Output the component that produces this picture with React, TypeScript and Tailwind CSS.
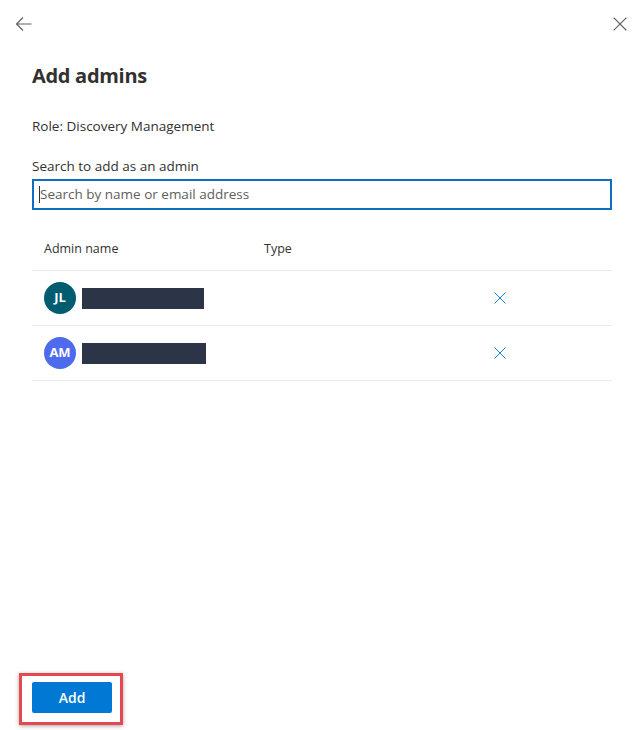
import React from "react";

const font = { fontFamily: '"Open Sans", "Noto Sans", sans-serif' };

function XIcon({ size, color, sw }: { size: number; color: string; sw: number }) {
  return (
    <svg width={size} height={size} viewBox="0 0 14 14" fill="none">
      <path d="M1 1L13 13M13 1L1 13" stroke={color} strokeWidth={sw} strokeLinecap="square" />
    </svg>
  );
}

function Row({ initials, bg, barW }: { initials: string; bg: string; barW: string }) {
  return (
    <div className="flex h-[55px] items-center border-b border-[#edebe9]">
      <div className="flex w-[458px] items-center pl-3">
        <div
          className={`flex h-8 w-8 items-center justify-center rounded-full ${bg} text-[13px] font-bold text-white`}
        >
          {initials}
        </div>
        <div className={`ml-[6px] h-[21px] ${barW} bg-[#2c3447]`} />
      </div>
      <div className="flex w-[20px] justify-center">
        <XIcon size={12} color="#0078d4" sw={1.1} />
      </div>
    </div>
  );
}

export default function App() {
  return (
    <div className="flex h-[730px] w-[644px] flex-col bg-white text-[#323130]" style={font}>
      <div className="flex h-12 items-center justify-between pl-[15px] pr-[17px]">
        <svg width="17" height="16" viewBox="0 0 17 16" fill="none">
          <path d="M16.5 8H1.5M8 1.5L1.5 8L8 14.5" stroke="#616161" strokeWidth="1.2" />
        </svg>
        <XIcon size={14} color="#616161" sw={1.1} />
      </div>
      <div className="px-8">
        <h1 className="mt-[14px] text-[20px] font-bold leading-7 tracking-[-0.3px]">Add admins</h1>
        <p className="mt-[26px] text-[13.5px] leading-5">Role: Discovery Management</p>
        <label className="mt-[20px] block text-[13.5px] font-medium leading-5">Search to add as an admin</label>
        <div className="mt-[3px] flex h-[31px] items-center border-2 border-[#106ebe] pl-[5px]">
          <span className="h-[17px] w-px bg-[#323130]" />
          <span className="text-[13.5px] text-[#605e5c]">Search by name or email address</span>
        </div>
        <div className="mt-[19px] flex h-[42px] items-center border-b border-[#edebe9] text-[12.5px] text-[#323130]">
          <span className="w-[232px] pl-3">Admin name</span>
          <span>Type</span>
        </div>
        <Row initials="JL" bg="bg-[#025c6f]" barW="w-[122px]" />
        <Row initials="AM" bg="bg-[#4f6bed]" barW="w-[124px]" />
      </div>
      <div className="flex-1" />
      <div className="pb-[5px] pl-[19px]">
        <div className="inline-block border-[3px] border-[#e5484d] pb-[9px] pl-[10px] pr-2 pt-[6px] shadow-[0_1px_4px_rgba(0,0,0,0.35)]">
          <button className="flex h-[31px] w-20 items-center justify-center rounded-[2px] bg-[#0078d4] text-[14px] font-semibold text-white">
            Add
          </button>
        </div>
      </div>
    </div>
  );
}
